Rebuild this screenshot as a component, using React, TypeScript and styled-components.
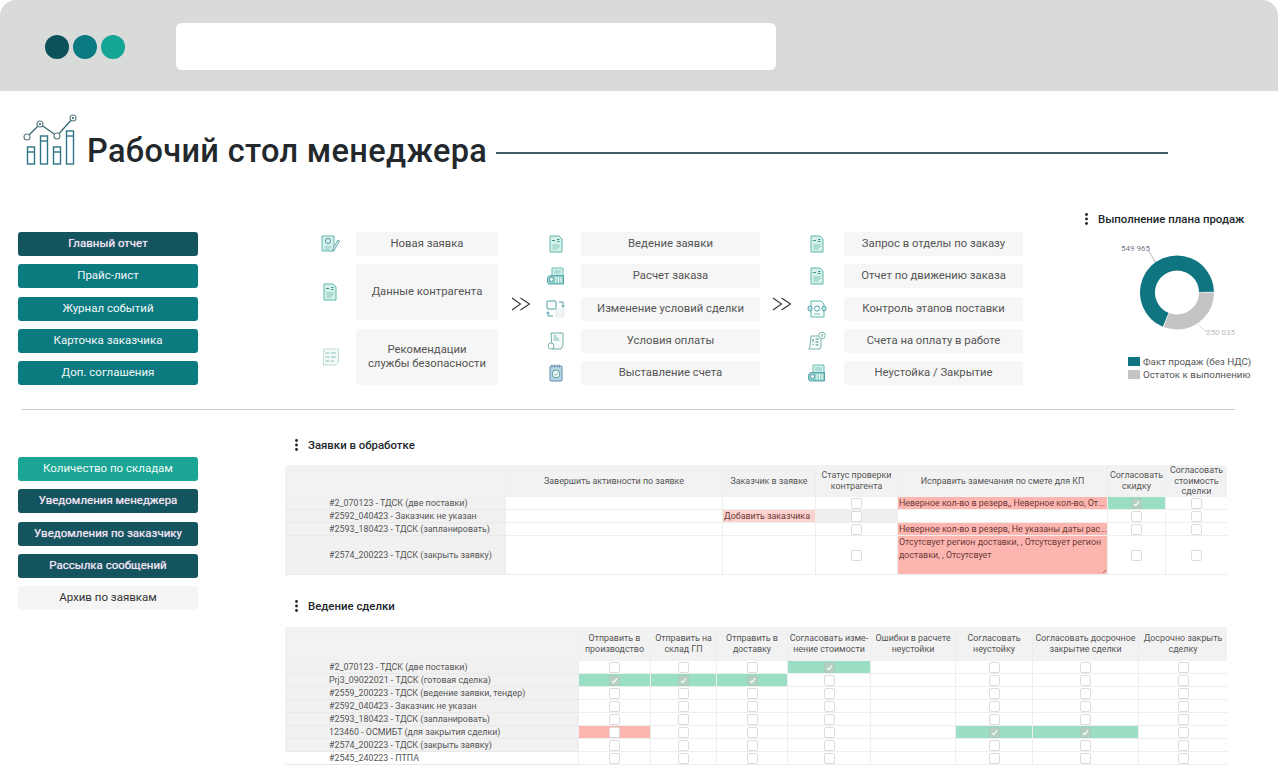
import type { ReactElement } from "react";
import styled, { createGlobalStyle } from "styled-components";

const GlobalStyle = createGlobalStyle`
  html, body {
    margin: 0;
    padding: 0;
    background: #fff;
    font-family: Roboto, "Liberation Sans", sans-serif;
  }
`;

const Page = styled.div`
  width: 1278px;
  height: 777px;
  overflow: hidden;
  background: #fff;
`;

/* browser chrome */
const BrowserBar = styled.div`
  height: 91px;
  display: flex;
  align-items: center;
  padding: 2px 0 0 45px;
  box-sizing: border-box;
  background: #d9dbda;
  border-radius: 16px 16px 0 0;
`;

const Dots = styled.div`
  display: flex;
  gap: 4px;
  margin-right: 51px;
`;

const Dot = styled.span<{ $color: string }>`
  width: 24px;
  height: 24px;
  border-radius: 50%;
  background: ${(p) => p.$color};
`;

const AddressBox = styled.div`
  width: 600px;
  height: 47px;
  background: #fff;
  border-radius: 6px;
`;

/* page heading */
const Heading = styled.div`
  height: 118px;
  box-sizing: border-box;
  padding: 23px 0 0 22px;
  display: flex;
  align-items: flex-start;
  gap: 9px;
`;

const LogoMark = styled.svg`
  flex: none;
`;

const TitleRow = styled.div`
  display: flex;
  align-items: center;
  gap: 9px;
  margin-top: 17px;
`;

const Title = styled.h1`
  margin: 0;
  font-size: 32.5px;
  line-height: 40px;
  font-weight: 500;
  letter-spacing: 0.35px;
  color: #22282b;
  white-space: nowrap;
`;

const TitleLine = styled.div`
  width: 672px;
  height: 2px;
  margin-top: 3px;
  background: #3f5b64;
`;

/* top part */
const TopSection = styled.div`
  height: 200px;
  display: flex;
  align-items: flex-start;
  padding-left: 18px;
`;

const Nav = styled.div<{ $top: number }>`
  width: 180px;
  flex: none;
  margin-top: ${(p) => p.$top}px;
  display: flex;
  flex-direction: column;
  gap: 8.25px;
`;

const tones: Record<string, string> = {
  teal: "background:#0c7b80;color:#f2f8f8;",
  dark: "background:#14545e;color:#f6e9f6;text-shadow:0 0 1px rgba(255,225,255,.65);",
  light: "background:#1aa594;color:#f0fbf8;",
  plain: "background:#f5f5f5;color:#333;",
};

const NavButton = styled.div<{ $tone: string }>`
  height: 24px;
  line-height: 23px;
  border-radius: 3px;
  text-align: center;
  font-size: 11.5px;
  white-space: nowrap;
  ${(p) => tones[p.$tone]}
`;

const Flow = styled.div`
  margin: 23px 0 0 122px;
  display: flex;
  align-items: stretch;
  flex: none;
`;

const StepColumn = styled.div`
  display: flex;
  flex-direction: column;
  gap: 8.25px;
`;

const StepRow = styled.div<{ $height: number }>`
  height: ${(p) => p.$height}px;
  display: flex;
  align-items: center;
`;

const StepIcon = styled.div<{ $width: number }>`
  width: ${(p) => p.$width}px;
  flex: none;
  display: flex;
  align-items: center;
`;

const StepButton = styled.div<{ $width: number }>`
  width: ${(p) => p.$width}px;
  height: 100%;
  display: flex;
  align-items: center;
  justify-content: center;
  text-align: center;
  white-space: pre-line;
  line-height: 14px;
  font-size: 11.3px;
  border-radius: 3px;
  background: #f6f6f6;
  color: #555;
`;

const FlowArrow = styled.div<{ $width: number }>`
  width: ${(p) => p.$width}px;
  flex: none;
  display: flex;
  align-items: center;
  justify-content: center;
  padding: 0 3px 9px 0;
  box-sizing: border-box;
`;

const ChartPanel = styled.div`
  margin-left: 62px;
  width: 170px;
  flex: none;
`;

const SectionTitle = styled.div`
  height: 20px;
  display: flex;
  align-items: center;
  gap: 10px;
  font-size: 11.4px;
  font-weight: 500;
  color: #20262a;
  white-space: nowrap;
`;

const ChartFigure = styled.svg`
  display: block;
  margin-top: 9px;
`;

const Legend = styled.div`
  margin-top: 12px;
  padding-left: 43px;
  display: flex;
  flex-direction: column;
`;

const LegendRow = styled.div`
  height: 13px;
  display: flex;
  align-items: center;
  gap: 3px;
  font-size: 9.8px;
  color: #555;
  white-space: nowrap;
`;

const Swatch = styled.span<{ $color: string }>`
  width: 12px;
  height: 9px;
  flex: none;
  background: ${(p) => p.$color};
`;

const Divider = styled.div`
  width: 1213px;
  height: 1px;
  margin-left: 22px;
  background: #d2c4c5;
`;

/* bottom part */
const BottomSection = styled.div`
  margin-top: 25px;
  display: flex;
  align-items: flex-start;
  padding-left: 18px;
`;

const Tables = styled.div`
  margin-left: 87px;
  width: 942px;
  flex: none;
`;

const TableBlock = styled.div<{ $top: number; $gap: number }>`
  margin-top: ${(p) => p.$top}px;

  ${SectionTitle} {
    padding-left: 10px;
    margin-bottom: ${(p) => p.$gap}px;
  }
`;

const Grid = styled.table`
  width: 942px;
  table-layout: fixed;
  border-collapse: separate;
  border-spacing: 0;
  font-size: 8.9px;
  color: #555;
`;

const Col = styled.col<{ $w: number }>`
  width: ${(p) => p.$w}px;
`;

const HeadCell = styled.th<{ $height: number }>`
  height: ${(p) => p.$height}px;
  padding: 0 1px;
  box-sizing: border-box;
  font-weight: 400;
  line-height: 10.6px;
  text-align: center;
  white-space: pre-line;
  background: #f2f2f2;
  border-left: 1px solid #eeeeee;

  &:first-child {
    border-left: none;
  }
`;

const BodyRow = styled.tr<{ $height: number }>`
  height: ${(p) => p.$height}px;
`;

const LabelCell = styled.td<{ $plain?: boolean }>`
  padding: 0 0 0 44px;
  box-sizing: border-box;
  text-align: left;
  white-space: nowrap;
  line-height: 12px;
  background: ${(p) => (p.$plain ? "#fff" : "#f1f1f1")};
  border-bottom: 1px solid #e9e9e9;
`;

const cellTones: Record<string, string> = {
  none: "#fff",
  green: "#9adfc4",
  red: "#fdb6af",
  pink: "#fcd2ce",
  gray: "#eeeeee",
};

const DataCell = styled.td<{ $tone: string }>`
  position: relative;
  padding: 0;
  box-sizing: border-box;
  text-align: center;
  line-height: 0;
  background: ${(p) => cellTones[p.$tone]};
  border-left: 1px solid #eeeeee;
  border-bottom: 1px solid #eeeeee;
`;

const Note = styled.div<{ $wrap?: boolean }>`
  padding: 0 0 0 1px;
  text-align: left;
  font-size: 8.9px;
  line-height: 13px;
  height: ${(p) => (p.$wrap ? "38px" : "12px")};
  color: #6b3a38;
  white-space: ${(p) => (p.$wrap ? "normal" : "nowrap")};
`;

const ResizeGrip = styled.span`
  position: absolute;
  right: 1px;
  bottom: 1px;
  width: 4px;
  height: 4px;
  background: linear-gradient(135deg, transparent 60%, #8a6a68 60%, #8a6a68 75%, transparent 75%);
`;

const CheckBox = styled.span<{ $checked?: boolean }>`
  display: inline-flex;
  align-items: center;
  justify-content: center;
  width: 9px;
  height: 9px;
  vertical-align: middle;
  border-radius: 2px;
  border: 1px solid ${(p) => (p.$checked ? "#a9cdbc" : "#dcdcdc")};
  background: ${(p) => (p.$checked ? "#b5cfc3" : "#fff")};
  color: #fff;
`;

/* small drawings */
const PALE = "#d6f0ea";
const LINE = "#5fb7ab";
const BLUE = "#3f8fa5";

const Kebab = () => (
  <svg width="3" height="12" viewBox="0 0 3 12">
    <circle cx="1.5" cy="1.5" r="1.4" fill="#222" />
    <circle cx="1.5" cy="6" r="1.4" fill="#222" />
    <circle cx="1.5" cy="10.5" r="1.4" fill="#222" />
  </svg>
);

const Tick = () => (
  <svg width="7" height="7" viewBox="0 0 7 7">
    <path d="M1 3.8 2.8 5.6 6 1.4" fill="none" stroke="#fff" strokeWidth="1.2" />
  </svg>
);

const ArrowsIcon = () => (
  <svg width="20" height="14" viewBox="0 0 20 14">
    <path d="M1 1 9.5 7 1 13M9.5 1 18.5 7 9.5 13" fill="none" stroke="#333" strokeWidth="1.1" />
  </svg>
);

const Logo = () => (
  <LogoMark width="56" height="52" viewBox="0 0 56 52">
    <g fill="#fff" stroke="#2f7486" strokeWidth="1.4">
      <rect x="5.5" y="33" width="7" height="17" />
      <path d="M5.5 38h7" />
      <rect x="18.5" y="22" width="7" height="28" />
      <path d="M18.5 27h7" />
      <rect x="31.5" y="33" width="7" height="17" />
      <path d="M31.5 38h7" />
      <rect x="44.5" y="17" width="7" height="33" />
      <path d="M44.5 22h7" />
    </g>
    <path d="M5 23 18 10 35 22 51 4" fill="none" stroke="#2c6370" strokeWidth="1.3" />
    <g fill="#fff" stroke="#5d7c82" strokeWidth="1.1">
      <circle cx="5" cy="23" r="3" />
      <circle cx="18" cy="10" r="3" />
      <circle cx="35" cy="22" r="3" />
      <circle cx="51" cy="4" r="3" />
    </g>
    <circle cx="18" cy="10" r="1.1" fill="#2c6370" />
    <circle cx="51" cy="4" r="1.1" fill="#2c6370" />
  </LogoMark>
);

const DocBase = () => (
  <>
    <path d="M4 2h9l3 3v13H4z" fill={PALE} stroke={LINE} strokeWidth="1" />
    <path d="M6.5 11h7M6.5 13h7M6.5 15h5" stroke={LINE} strokeWidth=".7" />
  </>
);

const icons: Record<string, ReactElement> = {
  doc: (
    <>
      <DocBase />
      <path d="M6 6.5h3M11 5.5h2.5M11 7.5h2.5" stroke="#3c9488" strokeWidth="1" />
    </>
  ),
  edit: (
    <>
      <path d="M2 2h12v15H2z" fill={PALE} stroke={LINE} strokeWidth="1" />
      <circle cx="8" cy="7" r="2.6" fill="none" stroke={BLUE} strokeWidth=".9" />
      <path d="M4.5 13h7M4.5 15h5" stroke={LINE} strokeWidth=".7" />
      <path d="M13 14.5 18 6l1.5 1-5 8.5-1.8.8z" fill="#fff" stroke="#4d9aa2" strokeWidth=".9" />
    </>
  ),
  faq: (
    <>
      <path d="M3.5 2h15v13l-3 3h-12z" fill="#f1f8f6" stroke="#a5d3cb" strokeWidth=".9" strokeDasharray="2 .6" />
      <path d="M5.5 6h4M11 6h5M5.5 10h4M11 10h5M5.5 14h4M11 14h3" stroke="#8fc4bc" strokeWidth="1.1" />
    </>
  ),
  calc: (
    <>
      <path d="M6 2h11v14H6z" fill={PALE} stroke={LINE} strokeWidth=".9" />
      <path d="M8 5h7M8 7h7" stroke={LINE} strokeWidth=".7" />
      <path d="M1.5 12.5c0-2 2-3 3-3h13V18H3.5c-1.2 0-2-1-2-2z" fill="#8fcfc5" stroke={BLUE} strokeWidth=".8" />
      <path d="M10 11v5.500M12.500 11v5.500M15 11v5.500" stroke="#fff" strokeWidth="1" />
      <circle cx="5.5" cy="13.5" r="2" fill="#fff" stroke={BLUE} strokeWidth=".8" />
    </>
  ),
  swap: (
    <>
      <rect x="1" y="2" width="9" height="8" rx="1" fill="#fff" stroke="#4f9ea3" strokeWidth="1" />
      <rect x="10" y="10" width="8" height="8" fill="#f1f4f4" stroke="#dfe6e6" strokeWidth=".8" />
      <path d="M13 3h4v5M15.5 6.5 17 8.3l1.500-1.800" fill="none" stroke="#4f9ea3" strokeWidth="1" />
      <path d="M7 17H2v-4M.7 14.500 2 12.700l1.500 1.800" fill="none" stroke="#4f9ea3" strokeWidth="1" />
    </>
  ),
  pay: (
    <>
      <path d="M5 2h12v13l-2 3H6z" fill="#f4fbf9" stroke="#73ada8" strokeWidth="1" />
      <path d="M7.5 5h3M7.5 7h5M7.5 9h6" stroke="#6aa9a3" strokeWidth=".8" />
      <circle cx="5" cy="15" r="3" fill="#fff" stroke="#6aa9a3" strokeWidth=".9" />
    </>
  ),
  clip: (
    <>
      <rect x="4" y="3" width="12" height="15" rx="1" fill="#b8d3e2" stroke="#5f8fb0" strokeWidth="1" />
      <path d="M6 1.5v3M8.500 1.500v3M11 1.500v3M13.500 1.500v3" stroke="#5f8fb0" strokeWidth=".8" />
      <circle cx="10" cy="11" r="3.8" fill="#fff" stroke="#3d9a94" strokeWidth=".9" />
      <path d="M8.3 11 9.6 12.300 11.800 9.700" fill="none" stroke="#3d9a94" strokeWidth=".9" />
    </>
  ),
  review: (
    <>
      <path d="M4 2h10l3 3v13H4z" fill="#f4fbf9" stroke={LINE} strokeWidth="1" />
      <rect x="1" y="7" width="4" height="5" rx="2" fill="#bfe5dd" stroke={BLUE} strokeWidth=".8" />
      <rect x="15" y="7" width="4" height="5" rx="2" fill="#bfe5dd" stroke={BLUE} strokeWidth=".8" />
      <circle cx="10" cy="9.5" r="2.5" fill="#fff" stroke={BLUE} strokeWidth=".9" />
      <path d="M7 15h6" stroke={LINE} strokeWidth=".8" />
    </>
  ),
  bill: (
    <>
      <path d="M4 5h10v11l-1 2H1.500l1.500-2z" fill="#f4fbf9" stroke="#6aa9a3" strokeWidth=".9" />
      <path d="M6 8v3M6 13v1M8.500 8h3M8.500 11h3M8.500 14h3" stroke="#3c8a85" strokeWidth="1" />
      <circle cx="15" cy="4.5" r="3.3" fill="#fff" stroke="#6aa9a3" strokeWidth=".9" />
      <path d="M15 3v3" stroke="#3c8a85" strokeWidth=".9" />
    </>
  ),
};

const FlowIcon = ({ name }: { name: string }) => (
  <svg width="20" height="20" viewBox="0 0 20 20">
    {icons[name]}
  </svg>
);

/* data */
type Step = { icon: string; text: string; height?: number };

const firstSteps: Step[] = [
  { icon: "edit", text: "Новая заявка" },
  { icon: "doc", text: "Данные контрагента", height: 56 },
  { icon: "faq", text: "Рекомендации\nслужбы безопасности", height: 56 },
];

const secondSteps: Step[] = [
  { icon: "doc", text: "Ведение заявки" },
  { icon: "calc", text: "Расчет заказа" },
  { icon: "swap", text: "Изменение условий сделки" },
  { icon: "pay", text: "Условия оплаты" },
  { icon: "clip", text: "Выставление счета" },
];

const thirdSteps: Step[] = [
  { icon: "doc", text: "Запрос в отделы по заказу" },
  { icon: "doc", text: "Отчет по движению заказа" },
  { icon: "review", text: "Контроль этапов поставки" },
  { icon: "bill", text: "Счета на оплату в работе" },
  { icon: "calc", text: "Неустойка / Закрытие" },
];

type Cell = { check?: boolean; checked?: boolean; tone?: string; text?: string; wrap?: boolean };

const box: Cell = { check: true };
const none: Cell = {};
const done: Cell = { check: true, checked: true, tone: "green" };

const note = (text: string, wrap = false): Cell => ({ text, wrap, tone: "red" });

const requestsHead = [
  "",
  "Завершить активности по заявке",
  "Заказчик в заявке",
  "Статус проверки\nконтрагента",
  "Исправить замечания по смете для КП",
  "Согласовать\nскидку",
  "Согласовать\nстоимость\nсделки",
];

const requestsRows: { label: string; height: number; cells: Cell[] }[] = [
  {
    label: "#2_070123 - ТДСК (две поставки)",
    height: 13,
    cells: [none, none, box, note("Неверное кол-во в резерв,, Неверное кол-во, От..."), done, box],
  },
  {
    label: "#2592_040423 - Заказчик не указан",
    height: 13,
    cells: [none, { text: "Добавить заказчика", tone: "pink" }, { check: true, tone: "gray" }, none, box, box],
  },
  {
    label: "#2593_180423 - ТДСК (запланировать)",
    height: 12,
    cells: [none, none, box, note("Неверное кол-во в резерв, Не указаны даты рас..."), box, box],
  },
  {
    label: "#2574_200223 - ТДСК (закрыть заявку)",
    height: 39,
    cells: [none, none, box, note("Отсутсвует регион доставки, , Отсутсвует регион доставки, , Отсутсвует", true), box, box],
  },
];

const dealsHead = [
  "",
  "Отправить в\nпроизводство",
  "Отправить на\nсклад ГП",
  "Отправить в\nдоставку",
  "Согласовать изме-\nнение стоимости",
  "Ошибки в расчете\nнеустойки",
  "Согласовать\nнеустойку",
  "Согласовать досрочное\nзакрытие сделки",
  "Досрочно закрыть\nсделку",
];

const plainDeal: Cell[] = [box, box, box, box, none, box, box, box];

const dealsRows: { label: string; height: number; cells: Cell[]; plain?: boolean }[] = [
  { label: "#2_070123 - ТДСК (две поставки)", height: 13, cells: [box, box, box, done, none, box, box, box] },
  { label: "Prj3_09022021 - ТДСК (готовая сделка)", height: 13, cells: [done, done, done, box, none, box, box, box] },
  { label: "#2559_200223 - ТДСК (ведение заявки, тендер)", height: 13, cells: plainDeal },
  { label: "#2592_040423 - Заказчик не указан", height: 13, cells: plainDeal },
  { label: "#2593_180423 - ТДСК (запланировать)", height: 13, cells: plainDeal },
  {
    label: "123460 - ОСМИБТ (для закрытия сделки)",
    height: 13,
    cells: [{ check: true, tone: "red" }, box, box, box, none, done, done, box],
  },
  { label: "#2574_200223 - ТДСК (закрыть заявку)", height: 13, cells: plainDeal },
  { label: "#2545_240223 - ПТПА", height: 13, cells: plainDeal, plain: true },
];

const salesDone = 549965;
const salesLeft = 250035;

function Donut() {
  const r = 29.5;
  const c = 2 * Math.PI * r;
  const leftLen = (salesLeft / (salesDone + salesLeft)) * c;
  return (
    <ChartFigure width="170" height="105" viewBox="0 0 170 105">
      <path d="M63 12 71 25" stroke="#9a9a9a" strokeWidth=".7" fill="none" />
      <path d="M113 86 121 94h3" stroke="#c8c8c8" strokeWidth=".7" fill="none" />
      <text x="36" y="13" fontSize="8" fill="#767b88" fontFamily="Roboto">
        549 965
      </text>
      <text x="121" y="97" fontSize="8" fill="#bdbdbd" fontFamily="Roboto">
        250 035
      </text>
      <g transform="translate(92 54.5)" fill="none" strokeWidth="15">
        <circle r={r} stroke="#0f7580" strokeDasharray={`${c - leftLen - 0.8} ${c}`} transform="rotate(112.5)" />
        <circle r={r} stroke="#c4c4c4" strokeDasharray={`${leftLen - 0.8} ${c}`} />
      </g>
    </ChartFigure>
  );
}

function Steps({ steps, iconWidth, width }: { steps: Step[]; iconWidth: number; width: number }) {
  return (
    <StepColumn>
      {steps.map((s) => (
        <StepRow key={s.text} $height={s.height ?? 24}>
          <StepIcon $width={iconWidth}>
            <FlowIcon name={s.icon} />
          </StepIcon>
          <StepButton $width={width}>{s.text}</StepButton>
        </StepRow>
      ))}
    </StepColumn>
  );
}

function CellView({ cell }: { cell: Cell }) {
  return (
    <DataCell $tone={cell.tone ?? "none"}>
      {cell.check && <CheckBox $checked={cell.checked}>{cell.checked && <Tick />}</CheckBox>}
      {cell.text && <Note $wrap={cell.wrap}>{cell.text}</Note>}
      {cell.wrap && <ResizeGrip />}
    </DataCell>
  );
}

function DataTable({
  widths,
  head,
  headHeight,
  rows,
}: {
  widths: number[];
  head: string[];
  headHeight: number;
  rows: { label: string; height: number; cells: Cell[]; plain?: boolean }[];
}) {
  return (
    <Grid>
      <colgroup>
        {widths.map((w, i) => (
          <Col key={i} $w={w} />
        ))}
      </colgroup>
      <thead>
        <tr>
          {head.map((h, i) => (
            <HeadCell key={i} $height={headHeight}>
              {h}
            </HeadCell>
          ))}
        </tr>
      </thead>
      <tbody>
        {rows.map((r) => (
          <BodyRow key={r.label} $height={r.height}>
            <LabelCell $plain={r.plain}>{r.label}</LabelCell>
            {r.cells.map((c, i) => (
              <CellView key={i} cell={c} />
            ))}
          </BodyRow>
        ))}
      </tbody>
    </Grid>
  );
}

export default function App() {
  return (
    <Page>
      <GlobalStyle />
      <BrowserBar>
        <Dots>
          <Dot $color="#0b525a" />
          <Dot $color="#0b7a80" />
          <Dot $color="#14a594" />
        </Dots>
        <AddressBox />
      </BrowserBar>

      <Heading>
        <Logo />
        <TitleRow>
          <Title>Рабочий стол менеджера</Title>
          <TitleLine />
        </TitleRow>
      </Heading>

      <TopSection>
        <Nav $top={23}>
          <NavButton $tone="dark">Главный отчет</NavButton>
          <NavButton $tone="teal">Прайс-лист</NavButton>
          <NavButton $tone="teal">Журнал событий</NavButton>
          <NavButton $tone="teal">Карточка заказчика</NavButton>
          <NavButton $tone="teal">Доп. соглашения</NavButton>
        </Nav>

        <Flow>
          <Steps steps={firstSteps} iconWidth={36} width={142} />
          <FlowArrow $width={48}>
            <ArrowsIcon />
          </FlowArrow>
          <Steps steps={secondSteps} iconWidth={35} width={179} />
          <FlowArrow $width={47}>
            <ArrowsIcon />
          </FlowArrow>
          <Steps steps={thirdSteps} iconWidth={37} width={179} />
        </Flow>

        <ChartPanel>
          <SectionTitle>
            <Kebab />
            Выполнение плана продаж
          </SectionTitle>
          <Donut />
          <Legend>
            <LegendRow>
              <Swatch $color="#0f7580" />
              Факт продаж (без НДС)
            </LegendRow>
            <LegendRow>
              <Swatch $color="#c4c4c4" />
              Остаток к выполнению
            </LegendRow>
          </Legend>
        </ChartPanel>
      </TopSection>

      <Divider />

      <BottomSection>
        <Nav $top={22}>
          <NavButton $tone="light">Количество по складам</NavButton>
          <NavButton $tone="dark">Уведомления менеджера</NavButton>
          <NavButton $tone="dark">Уведомления по заказчику</NavButton>
          <NavButton $tone="dark">Рассылка сообщений</NavButton>
          <NavButton $tone="plain">Архив по заявкам</NavButton>
        </Nav>

        <Tables>
          <TableBlock $top={0} $gap={10}>
            <SectionTitle>
              <Kebab />
              Заявки в обработке
            </SectionTitle>
            <DataTable widths={[220, 217, 93, 82, 210, 58, 62]} head={requestsHead} headHeight={32} rows={requestsRows} />
          </TableBlock>
          <TableBlock $top={21} $gap={11}>
            <SectionTitle>
              <Kebab />
              Ведение сделки
            </SectionTitle>
            <DataTable widths={[293, 72, 66, 71, 83, 85, 77, 106, 89]} head={dealsHead} headHeight={34} rows={dealsRows} />
          </TableBlock>
        </Tables>
      </BottomSection>
    </Page>
  );
}
